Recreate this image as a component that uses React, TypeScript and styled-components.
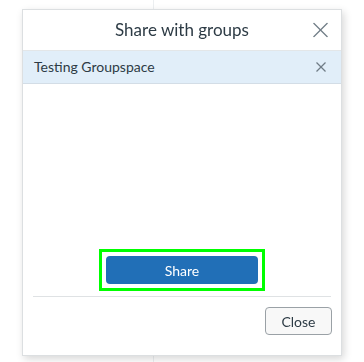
import React from "react";
import styled, { createGlobalStyle } from "styled-components";

const Global = createGlobalStyle`
  html, body { margin: 0; padding: 0; background: #ffffff; }
  body { font-family: Lato, "Noto Sans", "Liberation Sans", sans-serif; color: #2d3b45; }
  * { box-sizing: border-box; }
`;

const Page = styled.div`
  display: grid;
  grid-template-columns: 153px 1fr;
  height: 362px;
  width: 364px;
`;

const PageColumn = styled.div<{ $divided?: boolean }>`
  height: 100%;
  border-left: ${(p) => (p.$divided ? "1px solid #eceff1" : "none")};
`;

const Dialog = styled.div`
  position: fixed;
  left: 22px;
  top: 9px;
  width: 320px;
  height: 347px;
  background: #fff;
  border: 1px solid #dcdfe1;
  box-shadow: 2px 3px 8px rgba(0, 0, 0, 0.16);
  display: flex;
  flex-direction: column;
`;

const Header = styled.div`
  height: 41px;
  border-bottom: 1px solid #e3e6e8;
  display: flex;
  align-items: center;
  justify-content: center;
  position: relative;
`;

const Title = styled.h2`
  margin: 0 0 1px 0;
  font-size: 17px;
  font-weight: 400;
  color: #2d3b45;
  line-height: 20px;
`;

const IconButton = styled.button<{ $size: number }>`
  position: absolute;
  right: ${(p) => (p.$size > 12 ? 13 : 15)}px;
  top: 50%;
  transform: translateY(-50%);
  width: ${(p) => p.$size}px;
  height: ${(p) => p.$size}px;
  padding: 0;
  border: 0;
  background: transparent;
  display: flex;
  cursor: pointer;
`;

const GroupRow = styled.div`
  height: 33px;
  background: #e1eef9;
  border-bottom: 1px solid #d3dde6;
  display: flex;
  align-items: center;
  padding: 0 0 2px 11px;
  position: relative;
  font-size: 14px;
  color: #2d3b45;
`;

const Body = styled.div`
  flex: 1;
  display: flex;
  flex-direction: column;
  justify-content: flex-end;
  align-items: center;
  padding-bottom: 5px;
`;

const FocusRing = styled.div`
  border: 3px solid #00ff00;
  padding: 4px;
  display: flex;
`;

const PrimaryButton = styled.button`
  width: 152px;
  height: 28px;
  border: 0;
  border-radius: 4px;
  background: #216fb7;
  color: #fff;
  font-family: Lato, "Noto Sans", "Liberation Sans", sans-serif;
  font-size: 14px;
  cursor: pointer;
`;

const Divider = styled.hr`
  margin: 0 10px;
  border: 0;
  border-top: 1px solid #dfe2e4;
`;

const Footer = styled.div`
  display: flex;
  justify-content: flex-end;
  padding: 10px 9px 20px 10px;
`;

const SecondaryButton = styled.button`
  width: 67px;
  height: 28px;
  border: 1px solid #9aa1a6;
  border-radius: 4px;
  background: #f8f8f8;
  color: #2d3b45;
  font-family: Lato, "Noto Sans", "Liberation Sans", sans-serif;
  font-size: 14px;
  cursor: pointer;
`;

const XIcon = ({ size, color }: { size: number; color: string }) => (
  <svg width={size} height={size} viewBox={`0 0 ${size} ${size}`} fill="none">
    <line x1="0.5" y1="0.5" x2={size - 0.5} y2={size - 0.5} stroke={color} strokeWidth="1.2" />
    <line x1={size - 0.5} y1="0.5" x2="0.5" y2={size - 0.5} stroke={color} strokeWidth="1.2" />
  </svg>
);

export default function App() {
  return (
    <>
      <Global />
      <Page>
        <PageColumn />
        <PageColumn $divided />
      </Page>
      <Dialog>
        <Header>
          <Title>Share with groups</Title>
          <IconButton $size={15} aria-label="Close dialog">
            <XIcon size={15} color="#6f7c86" />
          </IconButton>
        </Header>
        <GroupRow>
          Testing Groupspace
          <IconButton $size={10} aria-label="Remove group">
            <XIcon size={10} color="#6f7c86" />
          </IconButton>
        </GroupRow>
        <Body>
          <FocusRing>
            <PrimaryButton>Share</PrimaryButton>
          </FocusRing>
        </Body>
        <Divider />
        <Footer>
          <SecondaryButton>Close</SecondaryButton>
        </Footer>
      </Dialog>
    </>
  );
}
